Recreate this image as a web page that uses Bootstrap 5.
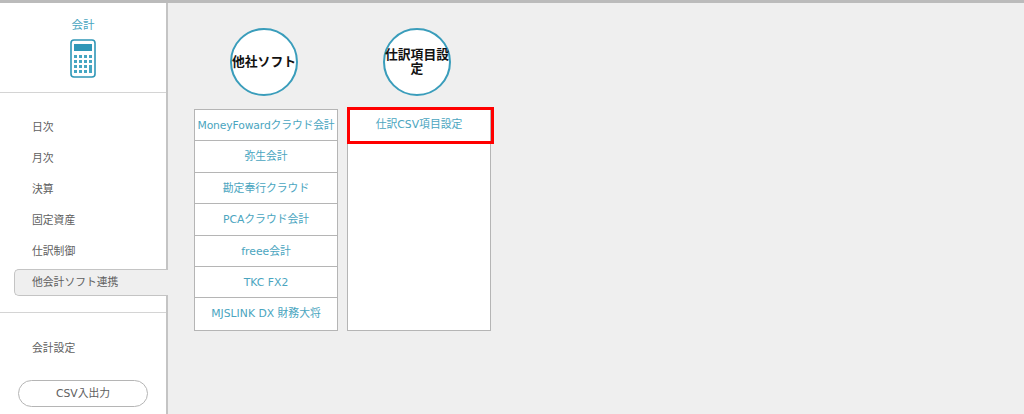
<!DOCTYPE html>
<html lang="ja">
<head>
<meta charset="UTF-8">
<title>会計</title>
<link href="https://cdn.jsdelivr.net/npm/bootstrap@5.3.3/dist/css/bootstrap.min.css" rel="stylesheet">
<style>
html, body { height: 414px; overflow: hidden; }
body { font-family: "DejaVu Sans", "Noto Sans CJK JP", sans-serif; font-size: 10.8px; color: #606060; background: #efefef; }
.app-frame { height: 414px; border-top: 3px solid #bbb; }
.side-panel { width: 168px; background: #fff; border-right: 2px solid #c4c4c4; }
.side-head { height: 90px; padding-top: 14px; border-bottom: 1px solid #d4d4d4; color: #4aa5c0; font-size: 11.5px; }
.side-head svg { display: block; margin: 5px auto 0; }
.side-menu { padding-top: 19px; padding-left: 14px; height: 220px; border-bottom: 1px solid #d4d4d4; }
.side-item { height: 31px; line-height: 31px; padding-left: 18px; }
.side-item.is-active { height: 27px; line-height: 25px; margin-top: 2px; margin-right: -2px; background: #efefef; border: 1px solid #c4c4c4; border-right: 0; border-radius: 5px 0 0 5px; padding-left: 17px; }
.side-setting { padding: 20px 0 0 32px; height: 67px; line-height: 31px; }
.csv-btn { width: 130px; height: 27px; margin-left: 18px; line-height: 25px; border: 1px solid #b5b5b5; border-radius: 14px; text-align: center; background: #fff; }
.main-area { padding: 25px 0 0 26px; gap: 9px; }
.soft-col { width: 144px; }
.round-title { width: 68px; height: 68px; margin-left: 36px; margin-bottom: 13px; border: 2px solid #3a9dbb; border-radius: 50%; background: #fff; color: #111; font-weight: 700; font-size: 12.8px; line-height: 14px; text-align: center; }
.link-box { height: 222px; background: #fff; border: 1px solid #b5b5b5; }
.link-row { height: 31.4px; line-height: 32px; text-align: center; color: #4aa5c0; border-bottom: 1px solid #b5b5b5; white-space: nowrap; }
.link-row:last-child { border-bottom: 0; }
.tight-row { letter-spacing: -.15px; }
.mark-row { position: relative; line-height: 30px; }
.mark-row::after { content: ""; position: absolute; left: -1px; top: -3px; width: 147px; height: 37px; border: 3px solid #f00; }
</style>
</head>
<body>
<div class="app-frame d-flex">
  <div class="side-panel flex-shrink-0">
    <div class="side-head text-center">
      会計
      <svg width="26" height="39" viewBox="0 0 26 39">
        <rect x="1" y="1" width="24" height="37" rx="3" fill="#fff" stroke="#2f97b7" stroke-width="1.6"/>
        <rect x="4" y="5" width="18" height="7" fill="#2f97b7"/>
        <g fill="#45a6c2">
          <rect x="4" y="16" width="3" height="3"/><rect x="9" y="16" width="3" height="3"/><rect x="14" y="16" width="3" height="3"/><rect x="19" y="16" width="3" height="3"/>
          <rect x="4" y="21" width="3" height="3"/><rect x="9" y="21" width="3" height="3"/><rect x="14" y="21" width="3" height="3"/><rect x="19" y="21" width="3" height="3"/>
          <rect x="4" y="26" width="3" height="3"/><rect x="9" y="26" width="3" height="3"/><rect x="14" y="26" width="3" height="3"/><rect x="19" y="26" width="3" height="8"/>
          <rect x="4" y="31" width="3" height="3"/><rect x="9" y="31" width="3" height="3"/><rect x="14" y="31" width="3" height="3"/>
        </g>
      </svg>
    </div>
    <div class="side-menu">
      <div class="side-item">日次</div>
      <div class="side-item">月次</div>
      <div class="side-item">決算</div>
      <div class="side-item">固定資産</div>
      <div class="side-item">仕訳制御</div>
      <div class="side-item is-active">他会計ソフト連携</div>
    </div>
    <div class="side-setting">会計設定</div>
    <div class="csv-btn">CSV入出力</div>
  </div>
  <div class="main-area d-flex flex-grow-1 align-items-start">
    <div class="soft-col">
      <div class="round-title d-flex align-items-center justify-content-center">他社ソフト</div>
      <div class="link-box">
        <div class="link-row tight-row">MoneyFowardクラウド会計</div>
        <div class="link-row">弥生会計</div>
        <div class="link-row">勘定奉行クラウド</div>
        <div class="link-row">PCAクラウド会計</div>
        <div class="link-row">freee会計</div>
        <div class="link-row">TKC FX2</div>
        <div class="link-row">MJSLINK DX 財務大将</div>
      </div>
    </div>
    <div class="soft-col">
      <div class="round-title d-flex align-items-center justify-content-center">仕訳項目設定</div>
      <div class="link-box">
        <div class="link-row mark-row">仕訳CSV項目設定</div>
      </div>
    </div>
  </div>
</div>
</body>
</html>
